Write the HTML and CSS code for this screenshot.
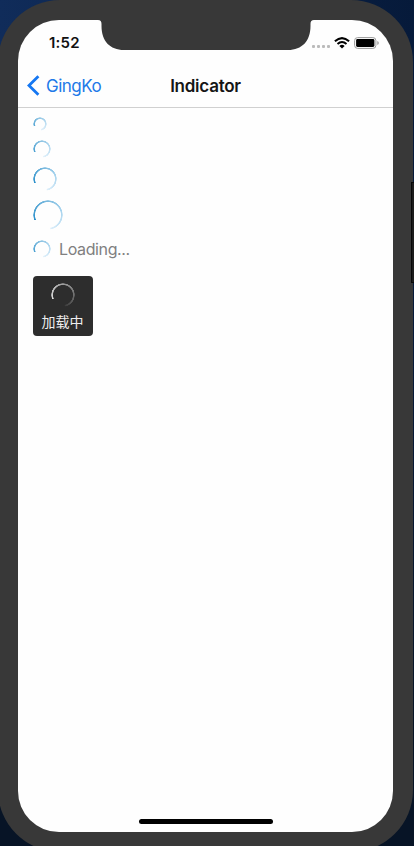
FILE: index.html
```html
<!DOCTYPE html>
<html lang="en">
<head>
<meta charset="utf-8">
<title>Indicator</title>
<link rel="stylesheet" href="styles.css">
</head>
<body>
<div class="device">
  <main class="screen">
    <svg class="notch" width="216" height="30" viewBox="0 0 216 30"><path d="M0 0C2.5 0 3.5 1.2 3.5 4V6C3.5 21 12 30 26 30H190C204 30 212.5 21 212.5 6V4C212.5 1.2 213.5 0 216 0Z"/></svg>
    <header class="status">
      <span class="time">1:52</span>
      <div class="status-icons">
        <span class="cell"><i></i><i></i><i></i><i></i></span>
        <svg class="wifi" width="16" height="12" viewBox="0 0 16 12"><g fill="none" stroke="#000" stroke-width="2"><path d="M.9 4.3Q8-2.1 15.1 4.3"/><path d="M3.5 7Q8 2.9 12.5 7"/></g><path d="M5.4 8.9Q8 6.7 10.6 8.9L8 11.5Z"/></svg>
        <svg class="battery" width="26" height="12" viewBox="0 0 26 12"><rect x=".6" y=".6" width="21.3" height="10.8" rx="3" fill="none" stroke="#999"/><rect x="2.1" y="2.1" width="18.3" height="7.8" rx="1.4"/><path d="M23.3 4Q24.8 4.5 24.8 6T23.3 8Z" fill="#999"/></svg>
      </div>
    </header>
    <nav class="navbar">
      <a class="back"><svg width="13" height="21" viewBox="0 0 13 21"><path d="M11.4 1.2L2 10.5l9.4 9.3" fill="none" stroke="#1577f2" stroke-width="2.8"/></svg><span>GingKo</span></a>
      <h1>Indicator</h1>
    </nav>
    <section class="content">
      <div class="spinner tiny"></div>
      <div class="spinner small"></div>
      <div class="spinner medium"></div>
      <div class="spinner large"></div>
      <div class="labelled"><div class="spinner small"></div><span>Loading...</span></div>
      <div class="toast"><div class="spinner medium light"></div><span class="toast-text" lang="zh">加载中</span></div>
    </section>
    <div class="home"></div>
  </main>
</div>
<div class="side-button"></div>
</body>
</html>
```
FILE: styles.css
```css
* { box-sizing: border-box; }
body {
  margin: 0;
  height: 846px;
  position: relative;
  overflow: hidden;
  background: linear-gradient(180deg, transparent 40%, #071426 85%), linear-gradient(90deg, #102c5a, #061a3a);
  font-family: Inter, "Noto Sans CJK SC", sans-serif;
}
.device {
  width: 415px;
  height: 852px;
  margin-left: -2px;
  padding: 20px;
  background: #383838;
  border-radius: 62px;
}
.screen {
  position: relative;
  display: flex;
  flex-direction: column;
  width: 375px;
  height: 812px;
  background: #fefefe;
  border-radius: 41px;
  overflow: hidden;
}
.notch { position: absolute; left: 80px; top: 0; fill: #383838; }
.status {
  display: flex;
  justify-content: space-between;
  height: 44px;
  padding: 0 13px 0 31px;
}
.time { padding-top: 14px; font-size: 15px; line-height: 18px; font-weight: 600; color: #111; letter-spacing: .2px; }
.status-icons { display: flex; padding-top: 17px; }
.cell { display: flex; gap: 2px; padding-top: 8px; margin-right: 4px; }
.cell i { width: 3px; height: 3px; border-radius: 1px; background: #bbb; }
.wifi { margin-right: 4px; }
.navbar {
  display: grid;
  grid-template-columns: 1fr auto 1fr;
  align-items: center;
  height: 44px;
  padding: 0 9px;
  border-bottom: 1px solid #d0d0d0;
}
.back { display: flex; align-items: center; gap: 6px; color: #2179e8; font-size: 17px; letter-spacing: -.5px; }
h1 { margin: 0; font-size: 17px; line-height: 22px; font-weight: 600; letter-spacing: -.25px; color: #151515; }
.content {
  display: flex;
  flex-direction: column;
  align-items: flex-start;
  flex: 1;
  padding: 9px 15px;
}
.spinner {
  border-radius: 50%;
  background: conic-gradient(from 248deg, #298fca, #72b5dc 95deg, #a5d2ed 180deg, #dceefa 280deg, transparent 285deg);
  mask: radial-gradient(closest-side, transparent calc(100% - 2.4px), #000 calc(100% - 1.7px), #000 calc(100% - .6px), transparent 100%);
}
.tiny { width: 14px; height: 14px; margin-bottom: 9px; opacity: .8; }
.small { width: 18px; height: 18px; margin-bottom: 9px; opacity: .85; }
.medium { width: 24px; height: 24px; margin-bottom: 9px; }
.large { width: 30px; height: 30px; margin-bottom: 8px; }
.labelled { display: flex; align-items: center; gap: 8px; height: 22px; color: #808080; font-size: 16px; letter-spacing: -.38px; }
.labelled .spinner { margin: 0; }
.toast {
  display: flex;
  flex-direction: column;
  align-items: center;
  width: 60px;
  height: 60px;
  margin-top: 16px;
  padding-top: 7px;
  border-radius: 4px;
  background: #2d2d2d;
  color: #eee;
  font: 14px/20px "Noto Sans CJK SC", sans-serif;
}
.toast .medium { margin-bottom: 4px; }
.toast-text { margin-right: 1px; }
.light { background: conic-gradient(from 248deg, #ddd, #999 120deg, #666 220deg, #3d3d3d 280deg, transparent 285deg); }
.home { align-self: center; width: 134px; height: 5px; margin-bottom: 8px; border-radius: 3px; background: #000; }
.side-button { position: absolute; left: 411px; top: 182px; width: 3px; height: 101px; background: #1c1c1c; border: 1px solid #080808; border-right: 0; }
```
